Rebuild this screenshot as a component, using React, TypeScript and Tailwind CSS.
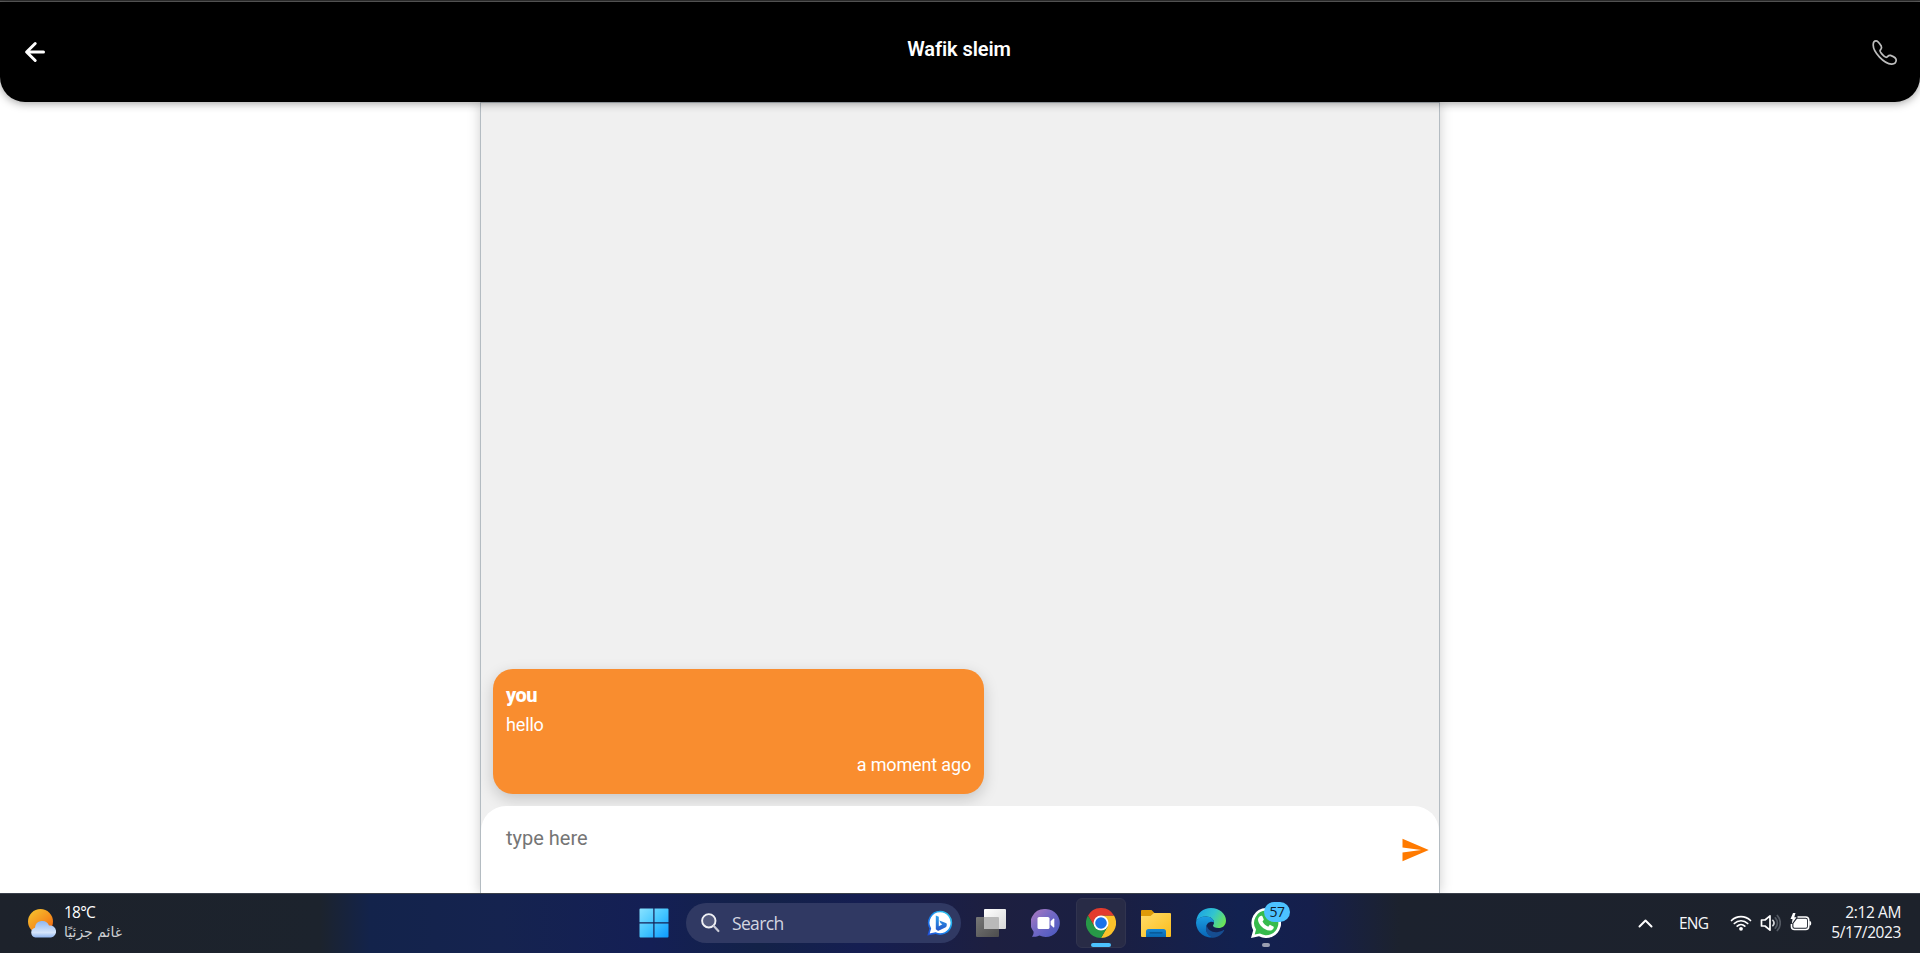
import type { ReactNode } from "react";

function Header() {
  return (
    <header className="relative z-10 flex h-[102px] shrink-0 flex-col">
      <div className="h-px bg-[#303030]" />
      <div className="h-px bg-[#606060]" />
      <div className="flex h-[100px] items-center justify-between rounded-b-[25px] bg-black px-5 shadow-[0_1px_10px_rgba(0,0,0,0.4)]">
        <svg width="30" height="30" viewBox="0 0 30 30" fill="none" stroke="white" strokeWidth="3" strokeLinecap="round" strokeLinejoin="round">
          <path d="M23.500 15H7M15.200 6.500L6.600 15l8.600 8.500" />
        </svg>
        <h1 className="pr-[2px] pb-1.5 text-[20px] leading-6 font-semibold tracking-[-0.1px] text-white">Wafik sleim</h1>
        <svg width="30" height="30" viewBox="10 7 30 30" fill="none" stroke="#bdbdbd" strokeWidth="1.700" strokeLinejoin="round">
          <path d="M13.200 15C13.200 12 14.300 10.800 16 10.800C18 10.800 19.600 13.200 21.200 16C22.400 18.200 21 19.200 20.100 20.300C19.300 21.400 24.500 27.800 26.500 27.300C27.900 26.800 28.300 24.700 30.500 25.400C33 26.300 36.400 28 36.200 30.300C36 33 34 34.200 31.500 34.100C24 33.800 13.200 22 13.200 15z" />
        </svg>
      </div>
    </header>
  );
}

function Chat() {
  return (
    <main className="mx-auto flex min-h-0 w-[960px] flex-1 flex-col justify-end border border-b-0 border-[#b4bcc2] bg-[#f0f0f0] shadow-[0_0_12px_rgba(0,0,0,0.2)]">
      <article className="mb-3 ml-3 flex h-[125px] w-[491px] flex-col rounded-[20px] bg-[#f98d2f] px-[13px] pt-3.5 text-white shadow-[0_5px_15px_rgba(0,0,0,0.18)]">
        <h2 className="text-[20px] leading-6 font-extrabold tracking-[-0.5px]">you</h2>
        <p className="mt-1.5 text-[18px] leading-6 tracking-[-0.15px]">hello</p>
        <time className="mt-4 self-end text-[18px] leading-6 tracking-[-0.15px]">a moment ago</time>
      </article>
      <section className="flex h-[87px] shrink-0 justify-between rounded-t-[25px] bg-white pt-5 pr-[9px] pl-[25px]">
        <span className="text-[20px] leading-6 text-[#757575]">type here</span>
        <svg className="mt-[9px]" width="30" height="30" viewBox="0 0 24 24" fill="#ff7a00">
          <path d="M2 21L23 12 2 3v7l15 2-15 2z" />
        </svg>
      </section>
    </main>
  );
}

function Slot({ children, active }: { children: ReactNode; active?: boolean }) {
  return (
    <div className={active ? "relative flex size-[50px] items-center justify-center rounded-md border border-[#31344f] bg-[#282b46]" : "relative flex size-[50px] items-center justify-center"}>
      {children}
    </div>
  );
}

function StartIcon() {
  return (
    <svg width="30" height="30" viewBox="0 0 30 30">
      <defs>
        <linearGradient id="win" gradientUnits="userSpaceOnUse" x1="0" y1="0" x2="30" y2="30">
          <stop stopColor="#8be3ff" />
          <stop offset="0.5" stopColor="#45c6ff" />
          <stop offset="1" stopColor="#0a98ff" />
        </linearGradient>
      </defs>
      <path fill="url(#win)" d="M1.500 .5H14.300v13.800H.5v-12.800a1 1 0 0 1 1-1zM15.500 .5H28.500a1 1 0 0 1 1 1v12.800H15.500zM.5 15.500H14.300v14H1.500a1 1 0 0 1-1-1zM15.500 15.500h14v13a1 1 0 0 1-1 1H15.500z" />
    </svg>
  );
}

function BingIcon() {
  return (
    <svg width="26" height="26" viewBox="0 0 26 26">
      <defs>
        <linearGradient id="bingRing" x1="0" y1="1" x2="1" y2="0">
          <stop stopColor="#1e4fd8" />
          <stop offset="0.5" stopColor="#168cf0" />
          <stop offset="1" stopColor="#35d5ee" />
        </linearGradient>
        <linearGradient id="bingB" x1="0" y1="0" x2="0" y2="1">
          <stop stopColor="#2fa5ee" />
          <stop offset="1" stopColor="#2456c9" />
        </linearGradient>
      </defs>
      <path d="M13.200 1.500a11.300 11.300 0 1 1-4.800 21.600L1.500 24.500l1.800-6A11.300 11.300 0 0 1 13.200 1.500z" fill="white" stroke="url(#bingRing)" strokeWidth="1.600" />
      <path d="M8.800 5.600l3 1.100v9.600l3.600-2-1.800-1-1.200-2.900 6.400 2.500c.8.300 1 .8 1 1.500 0 1.600-.4 2.400-1.500 3L12 20.400c-.5.300-1 .3-1.500 0l-1.700-1.200z" fill="url(#bingB)" />
    </svg>
  );
}

function TaskViewIcon() {
  return (
    <svg width="30" height="28" viewBox="0 0 30 28">
      <defs>
        <linearGradient id="tvBack" x1="0" y1="0" x2="1" y2="1">
          <stop stopColor="#777" />
          <stop offset="1" stopColor="#4d4d4d" />
        </linearGradient>
        <linearGradient id="tvFront" x1="0" y1="0" x2="1" y2="1">
          <stop stopColor="#fff" />
          <stop offset="1" stopColor="#d8d8d8" />
        </linearGradient>
      </defs>
      <rect x="0" y="8" width="23" height="20" rx="1" fill="url(#tvBack)" />
      <rect x="8" y="0" width="22" height="20" rx="1" fill="url(#tvFront)" />
      <path d="M8 8h14a1 1 0 0 1 1 1v11H8z" fill="#b9b9b9" />
    </svg>
  );
}

function ChatIcon() {
  return (
    <svg width="30" height="30" viewBox="0 0 30 30">
      <defs>
        <linearGradient id="teams" x1="0" y1="0" x2="1" y2="1">
          <stop stopColor="#b07abf" />
          <stop offset="0.45" stopColor="#7469c5" />
          <stop offset="1" stopColor="#4657bf" />
        </linearGradient>
      </defs>
      <path d="M15 1a14 14 0 1 1-6.500 26.500C6 29 3 29 .8 28.600c1.500-1.500 2-3.200 1.700-5.100A14 14 0 0 1 15 1z" fill="url(#teams)" />
      <rect x="6.500" y="9" width="12" height="12" rx="1.600" fill="white" />
      <path d="M19.600 13.200l2.600-2.500c.6-.5 1.100-.3 1.100.5v7.600c0 .8-.5 1-1.100.5l-2.600-2.500z" fill="white" />
    </svg>
  );
}

function ChromeIcon() {
  return (
    <svg width="30" height="30" viewBox="0 0 48 48">
      <path d="M24 12h20.800a24 24 0 0 1-20.800 36l10.400-18z" fill="#fcc22a" />
      <path d="M3.200 12A24 24 0 0 1 44.800 12H24L13.600 30z" fill="#e33b2e" />
      <path d="M3.200 12l10.400 18L24 36l10.400-6L24 48A24 24 0 0 1 3.200 12z" fill="#279847" />
      <circle cx="24" cy="24" r="12" fill="white" />
      <circle cx="24" cy="24" r="9.300" fill="#1b73e8" />
    </svg>
  );
}

function FolderIcon() {
  return (
    <svg width="30" height="27" viewBox="0 0 30 27">
      <defs>
        <linearGradient id="folder" x1="0" y1="0" x2="1" y2="1">
          <stop stopColor="#ffdc68" />
          <stop offset="1" stopColor="#fbbd1d" />
        </linearGradient>
        <linearGradient id="folderTray" x1="0" y1="0" x2="0" y2="1">
          <stop stopColor="#1687d5" />
          <stop offset="1" stopColor="#0868b2" />
        </linearGradient>
      </defs>
      <path d="M1 0h9.500L14 3.500V9H0V1a1 1 0 0 1 1-1z" fill="#de9b08" />
      <path d="M0 6h9.500L13 3h16a1 1 0 0 1 1 1v22a1 1 0 0 1-1 1H1a1 1 0 0 1-1-1z" fill="url(#folder)" />
      <path d="M7.500 19h15a2.500 2.500 0 0 1 2.500 2.500V27H5v-5.500A2.500 2.500 0 0 1 7.500 19z" fill="url(#folderTray)" />
      <path d="M9 22.800h12" stroke="#06518d" strokeWidth="1.300" strokeLinecap="round" />
    </svg>
  );
}

function EdgeIcon() {
  return (
    <svg width="30" height="30" viewBox="0 0 30 30">
      <defs>
        <linearGradient id="edgeTop" x1="0" y1="0.300" x2="1" y2="0.700">
          <stop stopColor="#1ca4e4" />
          <stop offset="0.5" stopColor="#32c4cf" />
          <stop offset="1" stopColor="#6ee650" />
        </linearGradient>
        <linearGradient id="edgeLeft" x1="0" y1="0" x2="0" y2="1">
          <stop stopColor="#1b9ee2" />
          <stop offset="1" stopColor="#0864b5" />
        </linearGradient>
      </defs>
      <path d="M.2 13C1.200 5 7 0 15 0c8.500 0 15 6 15 12.500 0 5-3.500 7.500-7.500 7.500-3.500 0-5.500-1.300-5.500-2.300 0-.7 1-1.200 1-3.200 0-3-3.200-6-8-6C5.800 8.500 2 10.500.2 13z" fill="url(#edgeTop)" />
      <path d="M0 15C0 11 4.500 8.500 10 8.500c4.800 0 8 3 8 6-2-2-8-.5-8 5.500 0 5.500 4.500 9.300 9 9A15 15 0 0 1 0 15z" fill="url(#edgeLeft)" />
      <path d="M10.700 17c.6 4.500 5.300 7.700 10.300 7.200 3-.3 5-1.200 6.500-2.200.5-.3 1 0 .7.600-2 3.600-5 6-9.200 6.800-6.500.2-11-6-8.300-12.400z" fill="#164d91" />
    </svg>
  );
}

function WhatsAppIcon() {
  return (
    <svg width="30" height="30" viewBox="0 0 30 30">
      <path d="M15 0a15 15 0 1 1-7 28.200L0 30l2.200-7.800A15 15 0 0 1 15 0z" fill="white" />
      <path d="M15 2.600a12.300 12.300 0 1 1-6 23L3.700 26.500l1.300-5A12.300 12.300 0 0 1 15 2.600z" fill="#36bb4c" />
      <path d="M10.300 7.700c.6 0 .9 0 1.200.7l1.200 2.900c.2.500-.1.900-1.200 2.200 1.400 2.600 3.200 4.100 5.800 5.200 1.300-1.700 1.500-2 2-1.800l3 1.500c.6.300.5.700.4 1.300-.4 2-2.500 3-4.200 2.900-5.700-.7-11-6-11.500-10.600-.1-1.800 1.200-4.300 3.300-4.300z" fill="white" />
    </svg>
  );
}

function WeatherIcon() {
  return (
    <svg width="28" height="29" viewBox="0 0 28 29">
      <defs>
        <linearGradient id="sun" x1="0.100" y1="0" x2="0.900" y2="1">
          <stop stopColor="#f5c42f" />
          <stop offset="0.6" stopColor="#f58c1c" />
          <stop offset="1" stopColor="#ee5b0d" />
        </linearGradient>
        <linearGradient id="cloud" x1="0" y1="0" x2="0" y2="1">
          <stop stopColor="#8fb7f2" />
          <stop offset="0.7" stopColor="#d5e5fb" />
          <stop offset="1" stopColor="#8fb5ef" />
        </linearGradient>
      </defs>
      <circle cx="12.500" cy="12.500" r="12.500" fill="url(#sun)" />
      <path d="M7.500 28.500a5 5 0 0 1-.5-9.800 7.300 7.300 0 0 1 14-2.200 6 6 0 0 1 2 12z" fill="url(#cloud)" />
    </svg>
  );
}

function Tray() {
  return (
    <div className="flex flex-1 items-center justify-end pr-[19px] text-[#f6f7f9]">
      <svg width="15" height="9" viewBox="0 0 15 9" fill="none" stroke="white" strokeWidth="2" strokeLinecap="round" strokeLinejoin="round">
        <path d="M1.500 7.500l6-6 6 6" />
      </svg>
      <span className="ml-[26px] w-[30px] text-[15.5px] leading-5 tracking-[-0.75px]">ENG</span>
      <svg className="mb-[2px] ml-[21px]" width="22" height="17" viewBox="0 0 22 17" fill="none" stroke="white" strokeWidth="1.700" strokeLinecap="round">
        <path d="M1.500 6.500a13.500 13.500 0 0 1 19 0M4.300 9.500a9.500 9.500 0 0 1 13.400 0M7.200 12.200a5.500 5.500 0 0 1 7.600 0" />
        <circle cx="11" cy="14.800" r="1.900" fill="white" stroke="none" />
      </svg>
      <svg className="ml-2" width="21" height="18" viewBox="0 0 21 18" fill="none" strokeWidth="1.700" strokeLinecap="round" strokeLinejoin="round">
        <path d="M1.500 6v6h3.500l5 4.200V1.800L5 6z" stroke="white" />
        <path d="M12.800 6.300a4 4 0 0 1 0 5.400" stroke="#d0d2d5" />
        <path d="M15.300 3.800a7.500 7.500 0 0 1 0 10.400M17.300 1.500a11 11 0 0 1 0 15" stroke="#535962" />
      </svg>
      <svg className="mb-[2px] ml-[9px]" width="22" height="18" viewBox="0 0 22 18">
        <path d="M7.500 4h8.200a3 3 0 0 1 3 3v6.500a3 3 0 0 1-3 3H4.500a3 3 0 0 1-3-3V11" fill="none" stroke="white" strokeWidth="1.600" />
        <path d="M7 5.800h8.700a1.300 1.300 0 0 1 1.300 1.300v6.300a1.300 1.300 0 0 1-1.300 1.300H4.700a1.300 1.300 0 0 1-1.300-1.300V10.500zM19.300 8c1.500 0 1.900.7 1.900 2.200s-.4 2.300-1.900 2.300z" fill="white" />
        <path d="M3 0L.5 6h2L1.800 11 6.500 4.300H4.300L5.500 0z" fill="white" />
      </svg>
      <div className="mb-[3px] ml-[17px] flex w-[72px] flex-col items-end text-[15.500px] leading-5 tracking-[-0.4px]">
        <span className="whitespace-nowrap">2:12 AM</span>
        <span className="whitespace-nowrap">5/17/2023</span>
      </div>
    </div>
  );
}

function Taskbar() {
  return (
    <footer className="relative z-10 flex h-[60px] shrink-0 items-center bg-[linear-gradient(90deg,#1d222b_0px,#1c232d_320px,#13234b_370px,#15234f_500px,#141f55_650px,#132248_760px,#151e52_860px,#1d1f40_990px,#1a1f43_1120px,#122150_1240px,#151f4c_1310px,#1c222e_1400px,#1d222b_1920px)] font-['Open_Sans','Noto_Sans',sans-serif] shadow-[inset_0_1px_0_#3a404b]">
      <div className="flex w-[629px] items-center pl-7">
        <WeatherIcon />
        <div className="mb-[2px] ml-2 flex flex-col items-start text-[15.500px] leading-5 tracking-[-0.8px] text-white">
          <span>18°C</span>
          <span dir="rtl" className="font-['DejaVu_Sans',sans-serif] text-[14px] tracking-normal text-[#cfd1d4]">غائم جزئيًا</span>
        </div>
      </div>
      <nav className="flex w-[662px] items-center">
        <Slot><StartIcon /></Slot>
        <div className="mr-[5px] ml-[7px] flex h-10 w-[275px] items-center rounded-full bg-[#303963] pr-2 pl-[15px]">
          <svg width="19" height="20" viewBox="0 0 19 20" fill="none" strokeLinecap="round">
            <circle cx="7.800" cy="7.800" r="6.700" fill="#535a7e" stroke="#f0f1f5" strokeWidth="1.900" />
            <path d="M12.800 13l4.600 5" stroke="#c9cbd6" strokeWidth="2.200" />
          </svg>
          <span className="ml-3 flex-1 text-[17.500px] leading-6 tracking-[-0.65px] text-[#d4d6e0]">Search</span>
          <BingIcon />
        </div>
        <div className="flex gap-[5px]">
          <Slot><TaskViewIcon /></Slot>
          <Slot><ChatIcon /></Slot>
          <Slot active>
            <ChromeIcon />
            <span className="absolute bottom-0 h-1 w-5 rounded-full bg-[#4cc2ff]" />
          </Slot>
          <Slot><FolderIcon /></Slot>
          <Slot><EdgeIcon /></Slot>
          <Slot>
            <WhatsAppIcon />
            <span className="absolute top-[4px] left-[23px] flex h-5 w-[26px] items-center justify-center rounded-full bg-[#4cc2ff] text-[14px] leading-5 tracking-[-0.5px] text-[#101c2c]">57</span>
            <span className="absolute bottom-px h-1 w-2 rounded-full bg-[#9a9eb0]" />
          </Slot>
        </div>
      </nav>
      <Tray />
    </footer>
  );
}

export default function App() {
  return (
    <div className="flex h-[953px] w-full flex-col overflow-hidden bg-white font-[Roboto,sans-serif]">
      <Header />
      <Chat />
      <Taskbar />
    </div>
  );
}
